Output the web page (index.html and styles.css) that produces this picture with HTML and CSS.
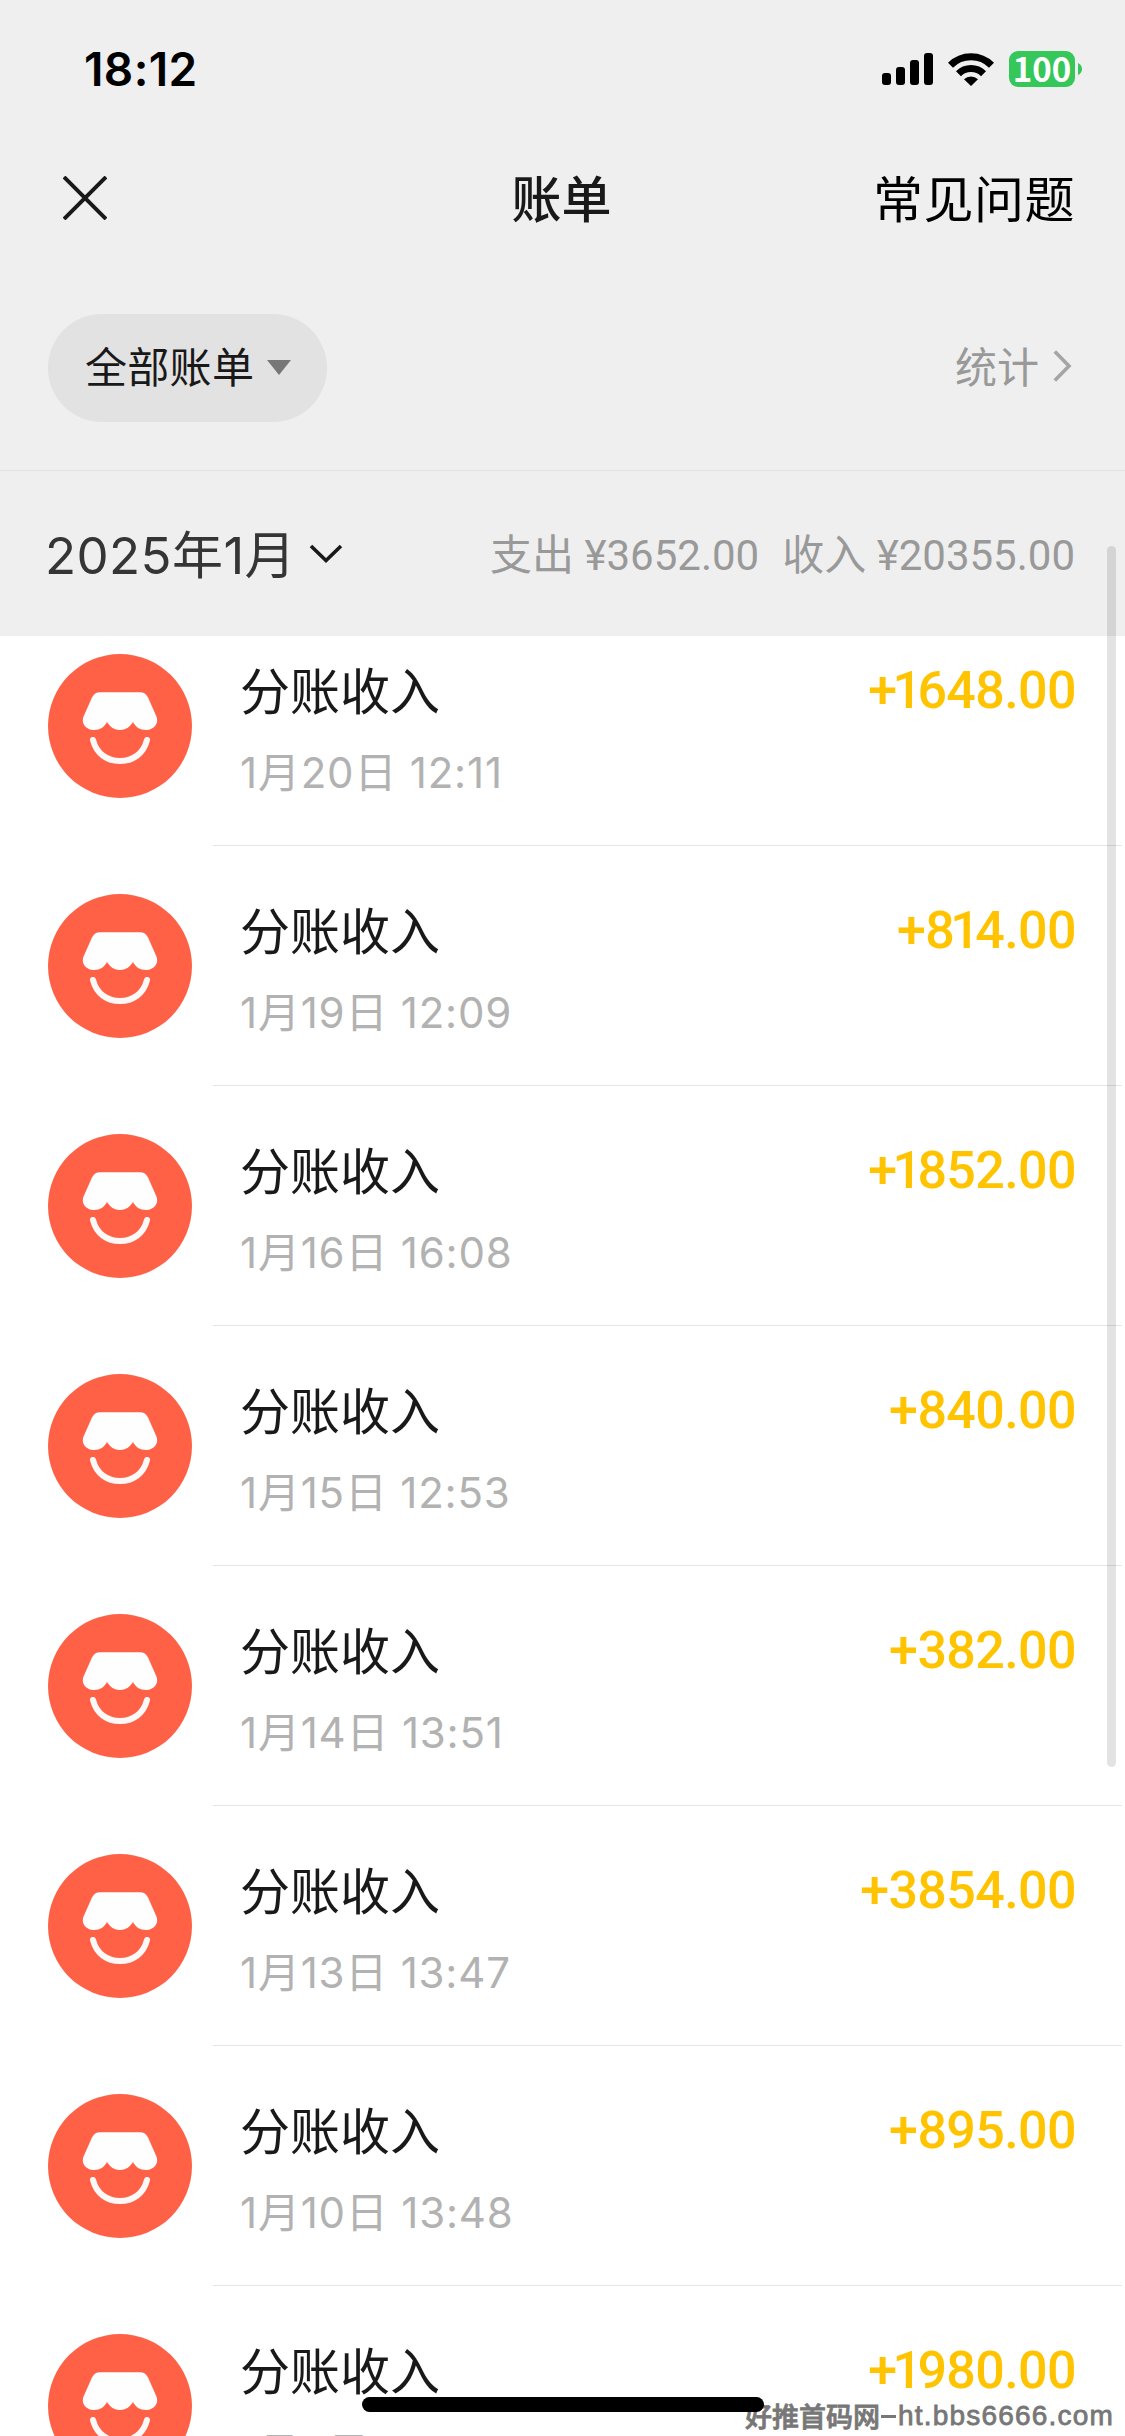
FILE: index.html
```html
<!DOCTYPE html>
<html lang="zh-CN">
<head>
<meta charset="utf-8">
<title>账单</title>
<link rel="stylesheet" href="styles.css">
</head>
<body>
<svg width="0" height="0" class="defs">
  <symbol id="shop" viewBox="0 0 144 144">
    <circle cx="72" cy="72" r="72" fill="#ff6147"/>
    <path d="M52 38.3H92Q97.500 38.300 100 43.500L108 61.500C112 70 105 76 98 76C92 76 87.500 73 85 68C82 73 77.500 76 72 76C66.500 76 62 73 59 68C56.500 73 52 76 46 76C39 76 32 70 36 61.500L44 43.500Q46.500 38.300 52 38.300Z" fill="#fefefe"/>
    <path d="M45 86C48.500 100 59.500 107 72 107S95.500 100 99 86" fill="none" stroke="#fbf8f7" stroke-width="6" stroke-linecap="round"/>
  </symbol>
</svg>
<div class="screen">
  <header class="header">
    <div class="status">
      <span class="time">18:12</span>
      <svg class="signal" width="51" height="32" viewBox="0 0 51 32"><rect x="0" y="20" width="9" height="12" rx="3"/><rect x="14" y="14" width="9" height="18" rx="3"/><rect x="28" y="7" width="9" height="25" rx="3"/><rect x="42" y="0" width="9" height="32" rx="3"/></svg>
      <svg class="wifi" width="46" height="33" viewBox="0 0 46 33"><path d="M2.500 12.300A29 29 0 0 1 43.500 12.300" fill="none" stroke="#000" stroke-width="7"/><path d="M10.500 20.700A17.500 17.500 0 0 1 35.500 20.700" fill="none" stroke="#000" stroke-width="7"/><path d="M16 26.300A10 10 0 0 1 30 26.300L23 33Z"/></svg>
      <div class="battery"><span class="level">100</span><svg width="4" height="12" viewBox="0 0 4 12"><path d="M0 0Q4 2 4 6T0 12Z" fill="#35c759"/></svg></div>
    </div>
    <nav class="nav">
      <svg class="close" width="44" height="44" viewBox="0 0 44 44"><path d="M1 1L43 43M43 1L1 43" stroke="#191919" stroke-width="4"/></svg>
      <h1 class="title">账单</h1>
      <span class="faq">常见问题</span>
    </nav>
    <div class="filters">
      <div class="pill"><span>全部账单</span><svg width="24" height="15" viewBox="0 0 24 15"><path d="M0 0H24L12 15Z" fill="#777"/></svg></div>
      <div class="stats"><span>统计</span><svg width="19" height="32" viewBox="0 0 19 32"><path d="M1.800 1.500L16 16L1.800 30.500" fill="none" stroke="#a5a5a5" stroke-width="3.600"/></svg></div>
    </div>
    <div class="summary">
      <span class="month">2025年1月</span>
      <svg width="34" height="20" viewBox="0 0 34 20"><path d="M2 2L17 16.500L32 2" fill="none" stroke="#191919" stroke-width="3.600"/></svg>
      <div class="totals"><span>支出 <b>¥3652.00</b></span><span>收入 <b>¥20355.00</b></span></div>
    </div>
  </header>
  <main class="list">
    <div class="row"><svg class="avatar"><use href="#shop"/></svg><div class="body"><div class="info"><div class="name">分账收入</div><div class="date">1月20日 12:11</div></div><div class="amount"><i>+1</i>648.00</div></div></div>
    <div class="row"><svg class="avatar"><use href="#shop"/></svg><div class="body"><div class="info"><div class="name">分账收入</div><div class="date">1月19日 12:09</div></div><div class="amount">+<i>81</i>4.00</div></div></div>
    <div class="row"><svg class="avatar"><use href="#shop"/></svg><div class="body"><div class="info"><div class="name">分账收入</div><div class="date">1月16日 16:08</div></div><div class="amount"><i>+1</i>852.00</div></div></div>
    <div class="row"><svg class="avatar"><use href="#shop"/></svg><div class="body"><div class="info"><div class="name">分账收入</div><div class="date">1月15日 12:53</div></div><div class="amount">+840.00</div></div></div>
    <div class="row"><svg class="avatar"><use href="#shop"/></svg><div class="body"><div class="info"><div class="name">分账收入</div><div class="date">1月14日 13:51</div></div><div class="amount">+382.00</div></div></div>
    <div class="row"><svg class="avatar"><use href="#shop"/></svg><div class="body"><div class="info"><div class="name">分账收入</div><div class="date">1月13日 13:47</div></div><div class="amount">+3854.00</div></div></div>
    <div class="row"><svg class="avatar"><use href="#shop"/></svg><div class="body"><div class="info"><div class="name">分账收入</div><div class="date">1月10日 13:48</div></div><div class="amount">+895.00</div></div></div>
    <div class="row"><svg class="avatar"><use href="#shop"/></svg><div class="body"><div class="info"><div class="name">分账收入</div><div class="date">1月9日</div></div><div class="amount"><i>+1</i>980.00</div></div></div>
  </main>
  <div class="scrollbar"></div>
  <div class="watermark"><span>好推首码网</span><i></i><span class="site">ht.bbs6666.com</span></div>
  <div class="home"></div>
</div>
</body>
</html>
```
FILE: styles.css
```css
* { box-sizing: border-box; margin: 0; padding: 0; }
body { background: #fff; font-family: Inter, "Noto Sans CJK SC", sans-serif; color: #191919; }
svg { display: block; flex: none; }
.defs { position: absolute; }
.screen { position: relative; width: 1125px; height: 2436px; overflow: hidden; display: flex; flex-direction: column; }
span, .name, .date, .amount { white-space: nowrap; }

.header { position: relative; z-index: 1; flex: none; height: 636px; background: #efefef; display: flex; flex-direction: column; }
.status { display: flex; align-items: center; height: 138px; padding: 0 43px 0 84px; }
.time { font-size: 46px; font-weight: 600; color: #000; letter-spacing: 0.4px; }
.signal { margin-left: auto; }
.wifi { margin-left: 15px; }
.battery { display: flex; align-items: center; gap: 3px; margin-left: 15px; }
.level { width: 66px; height: 36px; border-radius: 9px; background: #35c759; color: #fff; font: 700 33px/34px "Noto Sans CJK SC", sans-serif; text-align: center; }

.nav { display: grid; grid-template-columns: 1fr auto 1fr; align-items: center; height: 120px; padding: 0 50px 0 63px; }
.title { font-size: 50px; font-weight: 500; line-height: 60px; padding-top: 3px; margin-left: -15px; }
.faq { justify-self: end; font-size: 50px; line-height: 60px; padding-top: 3px; letter-spacing: 0.5px; color: #000; }

.filters { display: flex; align-items: center; justify-content: space-between; height: 213px; padding: 8px 53px 0 48px; border-bottom: 1px solid #e3e3e3; }
.pill { display: flex; align-items: center; gap: 13px; width: 279px; height: 108px; padding-left: 37px; border-radius: 54px; background: #e2e2e2; font-size: 42px; letter-spacing: 0.3px; }
.pill svg { margin-top: -2px; }
.pill span, .stats span { padding-bottom: 7px; }
.stats svg { margin-top: -4px; }
.stats { display: flex; align-items: center; gap: 14px; font-size: 42px; color: #999; }

.summary { display: flex; align-items: center; height: 165px; padding: 0 50px 0 45px; }
.month { font-size: 51px; padding-bottom: 4px; letter-spacing: 0.4px; color: #353535; }
.summary svg { margin-left: 13px; }
.totals { display: flex; gap: 23px; margin-left: auto; padding-bottom: 4px; font: 42px "Noto Sans CJK SC", sans-serif; color: #999; }
.totals b { margin-left: 1px; font-family: Roboto, sans-serif; font-weight: 400; }

.list { flex: none; margin-top: -30px; }
.row { display: flex; height: 240px; padding-left: 48px; }
.avatar { width: 144px; height: 144px; margin-top: 48px; }
.body { flex: 1; display: flex; justify-content: space-between; margin: 0 3px 0 21px; padding: 56px 46px 0 27px; border-bottom: 1px solid #e4e4e4; }
.name { font-size: 50px; line-height: 60px; }
.date { margin-top: 21px; font-size: 42px; line-height: 60px; letter-spacing: 0.8px; color: #b2b2b2; }
.amount { margin-top: -1px; font: 500 52px/60px Roboto, sans-serif; letter-spacing: -0.6px; color: #ffc300; }
.amount i { font-style: normal; letter-spacing: -4.6px; }

.scrollbar { position: absolute; z-index: 2; left: 1107px; top: 546px; width: 9px; height: 1221px; border-radius: 5px; background: rgba(0,0,0,.11); }
.watermark { position: absolute; z-index: 2; right: 11px; bottom: 5px; display: flex; align-items: center; height: 30px; font: 500 27px/30px "Noto Sans CJK SC", sans-serif; color: #777; -webkit-text-stroke: .8px #777; }
.watermark i { width: 15px; height: 3px; margin: 0 2px 0 1px; background: #777; }
.site { font: 28px/30px "Liberation Sans", sans-serif; letter-spacing: 1.2px; }
.home { position: absolute; z-index: 3; left: 362px; top: 2397px; width: 402px; height: 15px; border-radius: 8px; background: #000; }
```
